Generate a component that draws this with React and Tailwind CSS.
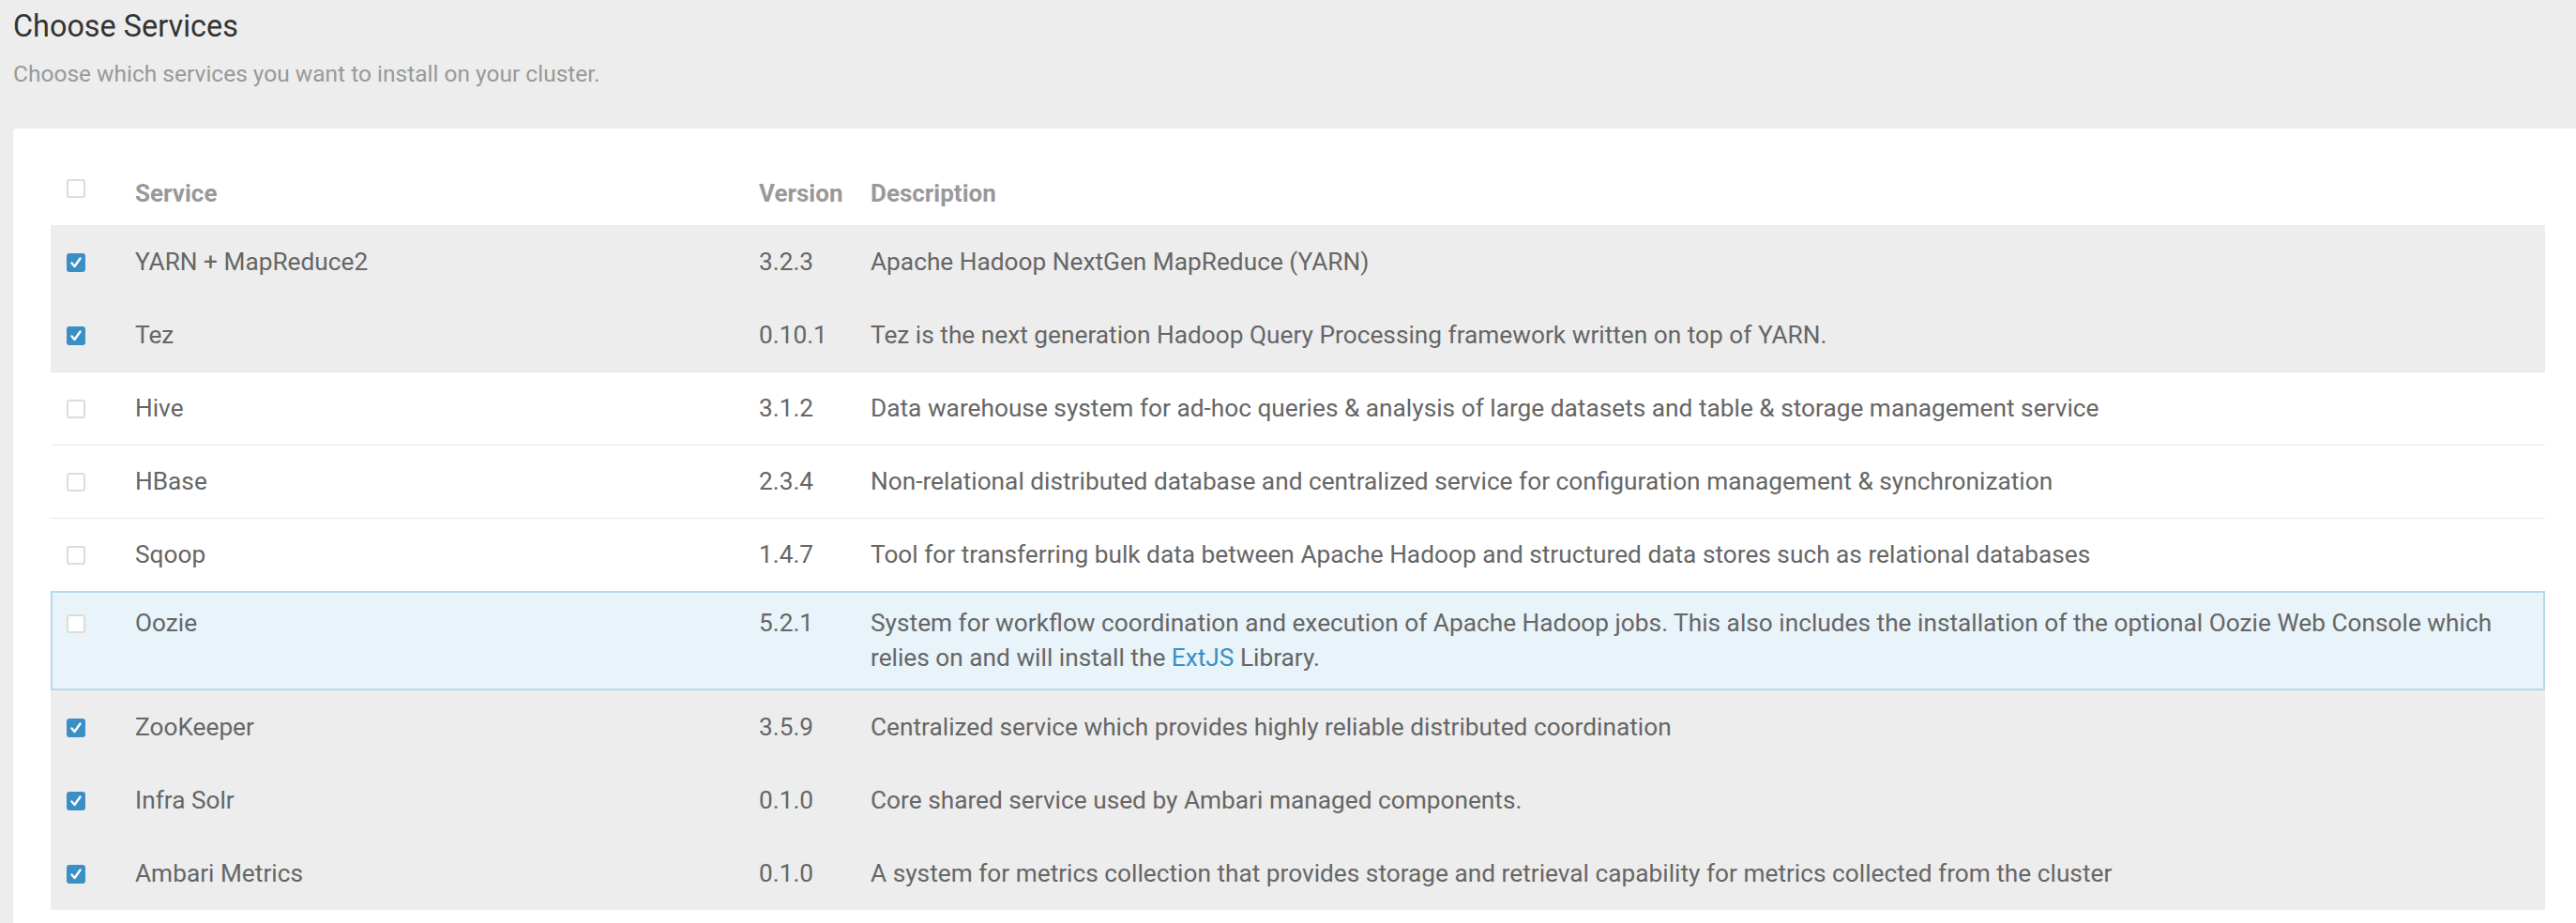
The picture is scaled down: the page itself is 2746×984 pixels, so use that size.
import React from "react";

const services = [
  { name: "YARN + MapReduce2", version: "3.2.3", desc: "Apache Hadoop NextGen MapReduce (YARN)", checked: true },
  { name: "Tez", version: "0.10.1", desc: "Tez is the next generation Hadoop Query Processing framework written on top of YARN.", checked: true },
  { name: "Hive", version: "3.1.2", desc: "Data warehouse system for ad-hoc queries & analysis of large datasets and table & storage management service", checked: false },
  { name: "HBase", version: "2.3.4", desc: "Non-relational distributed database and centralized service for configuration management & synchronization", checked: false },
  { name: "Sqoop", version: "1.4.7", desc: "Tool for transferring bulk data between Apache Hadoop and structured data stores such as relational databases", checked: false },
  { name: "Oozie", version: "5.2.1", desc: null, checked: false, hover: true },
  { name: "ZooKeeper", version: "3.5.9", desc: "Centralized service which provides highly reliable distributed coordination", checked: true },
  { name: "Infra Solr", version: "0.1.0", desc: "Core shared service used by Ambari managed components.", checked: true },
  { name: "Ambari Metrics", version: "0.1.0", desc: "A system for metrics collection that provides storage and retrieval capability for metrics collected from the cluster", checked: true },
];

function Checkbox({ checked }) {
  if (checked) {
    return (
      <span className="flex h-[20px] w-[20px] items-center justify-center rounded-[3px] bg-[#3a8fc4]">
        <svg width="14" height="14" viewBox="0 0 14 14">
          <path d="M2.5 7.5 L5.5 11 L11.5 2.5" fill="none" stroke="white" strokeWidth="2.4" strokeLinecap="round" strokeLinejoin="round" />
        </svg>
      </span>
    );
  }
  return <span className="block h-[20px] w-[20px] rounded-[3px] border-2 border-[#dcdcdc] bg-white" />;
}

export default function App() {
  return (
    <div className="min-h-[984px] w-full overflow-hidden bg-[#ededed] font-['Roboto',sans-serif]">
      <div className="pl-[14px]">
        <h2 className="pt-[10px] text-[32.4px] leading-[36px] font-normal text-[#333]">Choose Services</h2>
        <p className="mt-[14px] text-[24.5px] leading-[37px] text-[#999]">
          Choose which services you want to install on your cluster.
        </p>
        <div className="mt-[40px] mr-[-7px] min-h-[850px] rounded-[4px] bg-white px-[40px] pt-[51px]">
          {/* header */}
          <div className="flex items-start pb-[15px] text-[26px] leading-[37px] font-bold text-[#999]">
            <div className="w-[90px] pl-[17px] pt-[3px]">
              <Checkbox checked={false} />
            </div>
            <div className="w-[665px]">Service</div>
            <div className="w-[119px]">Version</div>
            <div className="flex-1">Description</div>
          </div>
          {/* rows */}
          {services.map((s) => (
            <div
              key={s.name}
              className={
                s.hover
                  ? "flex items-start border-2 border-[#b3dbee] bg-[#e8f3fa] py-[14px] text-[26.25px] leading-[37px] text-[#666]"
                  : s.checked
                  ? "flex items-start border-t border-[#ebebeb] bg-[#ededed] py-[20px] text-[26.25px] leading-[37px] text-[#666]"
                  : "flex items-start border-t border-[#e6e6e6] bg-white py-[20px] text-[26.25px] leading-[37px] text-[#666]"
              }
            >
              <div className={s.hover ? "flex h-[37px] w-[88px] items-center pl-[15px]" : "flex h-[37px] w-[90px] items-center pl-[17px]"}>
                <Checkbox checked={s.checked} />
              </div>
              <div className="w-[665px]">{s.name}</div>
              <div className="w-[119px]">{s.version}</div>
              <div className="flex-1 pr-[17px]">
                {s.desc ?? (
                  <>
                    System for workflow coordination and execution of Apache Hadoop jobs. This also includes the installation of the optional Oozie Web Console which relies on and will install the{" "}
                    <span className="text-[#3a8fc4]">ExtJS</span> Library.
                  </>
                )}
              </div>
            </div>
          ))}
        </div>
      </div>
    </div>
  );
}
